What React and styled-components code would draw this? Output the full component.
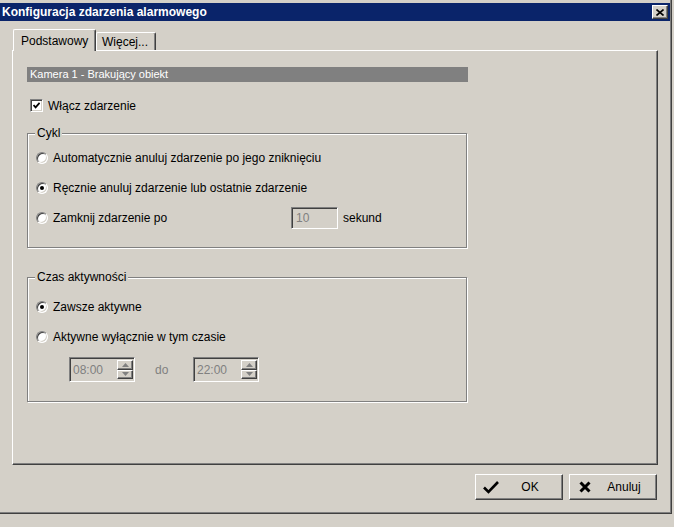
import React from "react";
import styled, { createGlobalStyle } from "styled-components";

const Global = createGlobalStyle`
  html, body {
    margin: 0;
    padding: 0;
    background: #d4d0c8;
  }
  body {
    font-family: "Liberation Sans", Arial, sans-serif;
    font-size: 12px;
    color: #000;
  }
`;

const Screen = styled.div`
  width: 674px;
  height: 527px;
  overflow: hidden;
  background: #d4d0c8;
`;

const Window = styled.div`
  width: 672px;
  height: 514px;
  box-sizing: border-box;
  padding-top: 3px;
  border-right: 1px solid #404040;
  border-bottom: 1px solid #404040;
  box-shadow: inset -1px -1px 0 #808080;
  display: flex;
  flex-direction: column;
`;

const TitleBar = styled.div`
  height: 18px;
  margin-right: 1px;
  padding: 0 2px;
  background: #0a246a;
  color: #fff;
  font-weight: bold;
  font-size: 12px;
  display: flex;
  align-items: center;
  justify-content: space-between;
`;

const CloseButton = styled.div`
  width: 16px;
  height: 14px;
  box-sizing: border-box;
  background: #d4d0c8;
  border: 1px solid;
  border-color: #fff #404040 #404040 #fff;
  box-shadow: inset -1px -1px 0 #808080;
  display: flex;
  align-items: center;
  justify-content: center;
`;

const Body = styled.div`
  padding: 8px 0 0 12px;
  display: flex;
  flex-direction: column;
`;

const Tabs = styled.div`
  display: flex;
  align-items: flex-end;
  height: 21px;
  margin-left: 1px;
`;

const Tab = styled.div`
  box-sizing: border-box;
  width: ${(p) => p.$width}px;
  height: ${(p) => (p.$active ? 22 : 18)}px;
  padding-left: ${(p) => (p.$active ? 7 : 5)}px;
  margin-bottom: ${(p) => (p.$active ? -1 : 0)}px;
  border-top: 1px solid #fff;
  border-left: 1px solid #fff;
  border-right: 1px solid #404040;
  border-radius: 2px 2px 0 0;
  box-shadow: inset -1px 0 0 #808080;
  background: #d4d0c8;
  display: flex;
  align-items: center;
  position: relative;
  z-index: ${(p) => (p.$active ? 1 : 0)};
`;

const Panel = styled.div`
  box-sizing: border-box;
  width: 646px;
  height: 415px;
  border-top: 1px solid #fff;
  border-left: 1px solid #fff;
  border-right: 1px solid #404040;
  border-bottom: 1px solid #404040;
  box-shadow: inset -1px -1px 0 #808080;
`;

const Inner = styled.div`
  width: 441px;
  margin-left: 14px;
  padding-top: 16px;
  display: flex;
  flex-direction: column;
`;

const HeaderBar = styled.div`
  height: 15px;
  line-height: 15px;
  padding-left: 3px;
  background: #808080;
  color: #fff;
  font-size: 11px;
`;

const CheckRow = styled.div`
  margin-top: 16px;
  height: 15px;
  padding-left: 3px;
  display: flex;
  align-items: center;
  gap: 5px;
`;

const CheckBox = styled.span`
  box-sizing: border-box;
  width: 13px;
  height: 13px;
  flex: none;
  background: #fff;
  border: 1px solid;
  border-color: #808080 #fff #fff #808080;
  box-shadow: inset 1px 1px 0 #404040, inset -1px -1px 0 #d4d0c8;
  display: flex;
  align-items: center;
  justify-content: center;
`;

const Group = styled.div`
  box-sizing: border-box;
  margin-top: ${(p) => p.$gap}px;
  width: 440px;
  height: ${(p) => p.$height}px;
  border: 1px solid #808080;
  box-shadow: inset 1px 1px 0 #fff, 1px 1px 0 #fff;
  display: flex;
  flex-direction: column;
`;

const Legend = styled.span`
  align-self: flex-start;
  margin: -7px 0 0 7px;
  padding: 0 2px;
  height: 13px;
  line-height: 13px;
  background: #d4d0c8;
`;

const Options = styled.div`
  padding-top: ${(p) => p.$top}px;
  padding-left: 8px;
  display: flex;
  flex-direction: column;
`;

const OptionRow = styled.div`
  height: 30px;
  display: flex;
  align-items: center;
`;

const Radio = styled.span`
  box-sizing: border-box;
  width: 12px;
  height: 12px;
  flex: none;
  margin-right: 5px;
  border-radius: 50%;
  background: #fff;
  border: 1px solid;
  border-color: #808080 #fff #fff #808080;
  box-shadow: inset 1px 1px 0 #404040, inset -1px -1px 0 #d4d0c8;
  display: flex;
  align-items: center;
  justify-content: center;

  &::after {
    content: "";
    display: ${(p) => (p.$checked ? "block" : "none")};
    width: 4px;
    height: 4px;
    border-radius: 50%;
    background: #000;
  }
`;

const Label = styled.span`
  width: ${(p) => (p.$width ? `${p.$width}px` : "auto")};
  color: ${(p) => (p.$disabled ? "#808080" : "#000")};
  white-space: nowrap;
`;

const Field = styled.div`
  box-sizing: border-box;
  width: ${(p) => p.$width}px;
  height: ${(p) => p.$height}px;
  border: 1px solid;
  border-color: #808080 #fff #fff #808080;
  box-shadow: inset 1px 1px 0 #404040, inset -1px -1px 0 #d4d0c8;
  color: #808080;
  display: flex;
  align-items: center;
  padding-left: 4px;
  margin-right: 5px;
`;

const SpinRow = styled.div`
  margin-top: 5px;
  margin-left: 33px;
  height: 25px;
  display: flex;
  align-items: center;
`;

const Spinner = styled.div`
  box-sizing: border-box;
  width: 66px;
  height: 25px;
  padding: 2px 1px 2px 2px;
  border: 1px solid;
  border-color: #808080 #fff #fff #808080;
  box-shadow: inset 1px 1px 0 #404040, inset -1px -1px 0 #d4d0c8;
  display: flex;
`;

const SpinText = styled.span`
  flex: 1;
  color: #808080;
  display: flex;
  align-items: center;
  padding-left: 1px;
`;

const SpinButtons = styled.div`
  width: 16px;
  display: flex;
  flex-direction: column;
`;

const SpinButton = styled.div`
  flex: 1;
  box-sizing: border-box;
  border: 1px solid;
  border-color: #fff #404040 #404040 #fff;
  box-shadow: inset -1px -1px 0 #808080;
  display: flex;
  align-items: center;
  justify-content: center;
`;

const Between = styled.span`
  width: 58px;
  box-sizing: border-box;
  padding-left: 20px;
  color: #808080;
`;

const ButtonRow = styled.div`
  width: 645px;
  margin-top: 9px;
  display: flex;
  justify-content: flex-end;
  gap: 6px;
`;

const Button = styled.div`
  box-sizing: border-box;
  width: 88px;
  height: 26px;
  border: 1px solid;
  border-color: #fff #404040 #404040 #fff;
  box-shadow: inset -1px -1px 0 #808080;
  display: flex;
  align-items: center;
`;

const IconSlot = styled.span`
  width: 30px;
  flex: none;
  display: flex;
  align-items: center;
  justify-content: center;
`;

const ButtonText = styled.span`
  flex: 1;
  text-align: center;
  padding-right: 8px;
`;

const Arrow = ({ down }) => (
  <svg width="7" height="4" viewBox="0 0 7 4">
    <path
      d={down ? "M0 0 H7 L3.5 4 Z" : "M0 4 H7 L3.5 0 Z"}
      fill="#808080"
    />
  </svg>
);

const TimeSpin = ({ value }) => (
  <Spinner>
    <SpinText>{value}</SpinText>
    <SpinButtons>
      <SpinButton>
        <Arrow />
      </SpinButton>
      <SpinButton>
        <Arrow down />
      </SpinButton>
    </SpinButtons>
  </Spinner>
);

export default function App() {
  return (
    <Screen>
      <Global />
      <Window>
        <TitleBar>
          <span>Konfiguracja zdarzenia alarmowego</span>
          <CloseButton>
            <svg width="8" height="7" viewBox="0 0 8 7">
              <path d="M0.5 0.5 L7.5 6.5 M7.5 0.5 L0.5 6.5" stroke="#000" strokeWidth="1.6" />
            </svg>
          </CloseButton>
        </TitleBar>
        <Body>
          <Tabs>
            <Tab $active $width={83}>Podstawowy</Tab>
            <Tab $width={60}>Więcej...</Tab>
          </Tabs>
          <Panel>
            <Inner>
              <HeaderBar>Kamera 1 - Brakujący obiekt</HeaderBar>
              <CheckRow>
                <CheckBox>
                  <svg width="7" height="7" viewBox="0 0 7 7">
                    <path d="M0.5 3 L2.6 5.3 L6.6 0.8" stroke="#000" strokeWidth="1.8" fill="none" />
                  </svg>
                </CheckBox>
                <Label>Włącz zdarzenie</Label>
              </CheckRow>
              <Group $gap={20} $height={115}>
                <Legend>Cykl</Legend>
                <Options $top={3}>
                  <OptionRow>
                    <Radio />
                    <Label>Automatycznie anuluj zdarzenie po jego zniknięciu</Label>
                  </OptionRow>
                  <OptionRow>
                    <Radio $checked />
                    <Label>Ręcznie anuluj zdarzenie lub ostatnie zdarzenie</Label>
                  </OptionRow>
                  <OptionRow>
                    <Radio />
                    <Label $width={238}>Zamknij zdarzenie po</Label>
                    <Field $width={47} $height={22}>10</Field>
                    <Label>sekund</Label>
                  </OptionRow>
                </Options>
              </Group>
              <Group $gap={29} $height={125}>
                <Legend>Czas aktywności</Legend>
                <Options $top={8}>
                  <OptionRow>
                    <Radio $checked />
                    <Label>Zawsze aktywne</Label>
                  </OptionRow>
                  <OptionRow>
                    <Radio />
                    <Label>Aktywne wyłącznie w tym czasie</Label>
                  </OptionRow>
                  <SpinRow>
                    <TimeSpin value="08:00" />
                    <Between>do</Between>
                    <TimeSpin value="22:00" />
                  </SpinRow>
                </Options>
              </Group>
            </Inner>
          </Panel>
          <ButtonRow>
            <Button>
              <IconSlot>
                <svg width="16" height="13" viewBox="0 0 16 13">
                  <path d="M1 6.5 L5.5 11 L15 1" stroke="#000" strokeWidth="2.6" fill="none" />
                </svg>
              </IconSlot>
              <ButtonText>OK</ButtonText>
            </Button>
            <Button>
              <IconSlot>
                <svg width="12" height="12" viewBox="0 0 12 12">
                  <path d="M1.5 1.5 L10.5 10.5 M10.5 1.5 L1.5 10.5" stroke="#000" strokeWidth="3" />
                </svg>
              </IconSlot>
              <ButtonText>Anuluj</ButtonText>
            </Button>
          </ButtonRow>
        </Body>
      </Window>
    </Screen>
  );
}
